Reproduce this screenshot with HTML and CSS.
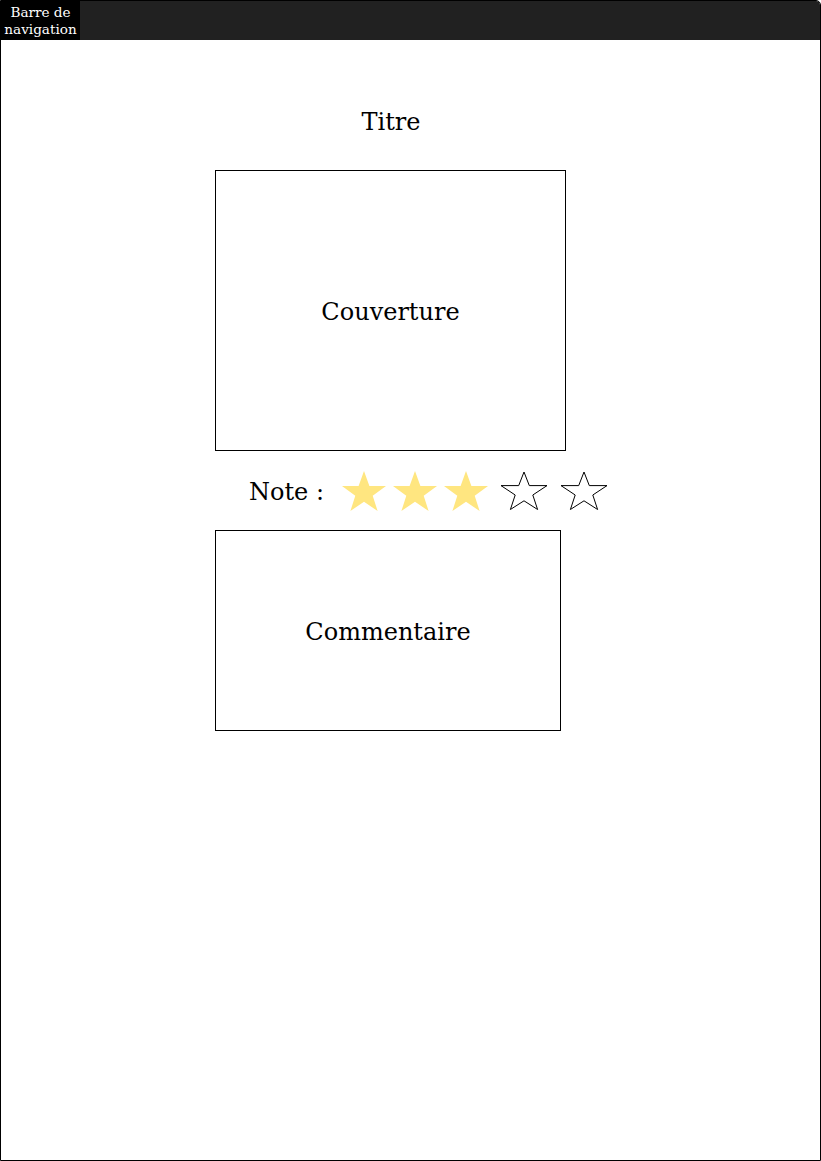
FILE: index.html
```html
<!DOCTYPE html>
<html lang="fr">
<head>
    <meta charset="UTF-8">
    <meta name="viewport" content="width=device-width, initial-scale=1.0">
    <title>Fiche livre</title>
    <link rel="stylesheet" href="styles.css">
</head>
<body>
    <div class="page">
        <!-- Barre du haut -->
        <div class="navbar">
            <div class="nav-label">Barre de<br>navigation</div>
        </div>

        <div class="content">
            <h1 class="title">Titre</h1>

            <div class="cover">Couverture</div>

            <div class="rating">
                <span class="rating-label">Note :</span>
                <svg class="star" width="46" height="42" viewBox="0 0 46 42"><polygon class="full" points="23,1 28.4,16 45,16 31.7,25.8 36.6,41 23,31.7 9.4,41 14.3,25.8 1,16 17.6,16"/></svg>
                <svg class="star" width="46" height="42" viewBox="0 0 46 42"><polygon class="full" points="23,1 28.4,16 45,16 31.7,25.8 36.6,41 23,31.7 9.4,41 14.3,25.8 1,16 17.6,16"/></svg>
                <svg class="star" width="46" height="42" viewBox="0 0 46 42"><polygon class="full" points="23,1 28.4,16 45,16 31.7,25.8 36.6,41 23,31.7 9.4,41 14.3,25.8 1,16 17.6,16"/></svg>
                <svg class="star empty-star" width="48" height="40" viewBox="0 0 48 40"><polygon class="empty" points="24,1 29.3,14.6 47,14.6 32.8,24 37.6,38.5 24,29.8 10.4,38.5 15.2,24 1,14.6 18.7,14.6"/></svg>
                <svg class="star empty-star" width="48" height="40" viewBox="0 0 48 40"><polygon class="empty" points="24,1 29.3,14.6 47,14.6 32.8,24 37.6,38.5 24,29.8 10.4,38.5 15.2,24 1,14.6 18.7,14.6"/></svg>
            </div>

            <div class="comment">Commentaire</div>
        </div>
    </div>
</body>
</html>
```

FILE: styles.css
```css
body {
    margin: 0;
    font-family: "DejaVu Serif", serif;
    background-color: #fff;
}

.page {
    width: 821px;
    height: 1161px;
    box-sizing: border-box;
    border: 1px solid #000;
    border-top-right-radius: 5px;
}

.navbar {
    height: 39px;
    background-color: #212121;
    border-top-right-radius: 4px;
    display: flex;
}

.nav-label {
    width: 79px;
    background-color: #000;
    color: #fff;
    font-size: 13.6px;
    line-height: 17px;
    text-align: center;
    padding-top: 3px;
    box-sizing: border-box;
}

.content {
    padding-left: 214px;
    display: flex;
    flex-direction: column;
    align-items: flex-start;
}

.title {
    width: 352px;
    margin: 67px 0 0;
    font-size: 24px;
    font-weight: normal;
    line-height: 30px;
    text-align: center;
}

.cover {
    width: 351px;
    height: 281px;
    margin-top: 33px;
    padding-top: 2px;
    box-sizing: border-box;
    border: 1px solid #000;
    display: flex;
    align-items: center;
    justify-content: center;
    font-size: 24px;
}

.rating {
    display: flex;
    align-items: center;
    height: 79px;
    padding-left: 34px;
}

.rating-label {
    font-size: 24px;
    margin-right: 17px;
    padding-top: 2px;
}

.star {
    display: block;
    margin-right: 5px;
}

.empty-star {
    margin: 0 6px;
}

.full {
    fill: #ffe680;
}

.empty {
    fill: none;
    stroke: #000;
    stroke-width: 1;
    stroke-linejoin: miter;
}

.comment {
    width: 346px;
    height: 201px;
    padding-top: 2px;
    box-sizing: border-box;
    border: 1px solid #000;
    display: flex;
    align-items: center;
    justify-content: center;
    font-size: 24px;
}
```
